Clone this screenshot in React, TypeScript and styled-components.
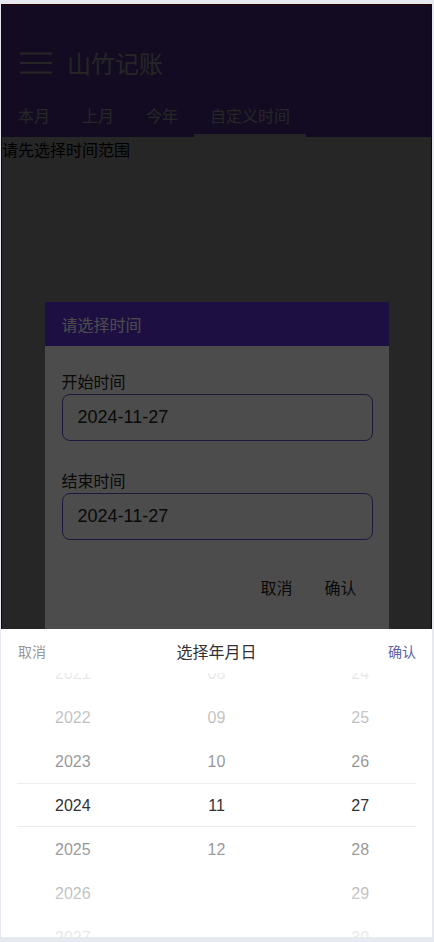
import React from "react";
import styled, { createGlobalStyle } from "styled-components";

const GlobalStyle = createGlobalStyle`
  html, body {
    margin: 0;
    padding: 0;
    background: #e6eaf0;
  }
  body {
    font-family: "Noto Sans CJK SC", "Liberation Sans", sans-serif;
  }
  * { box-sizing: border-box; }
`;

const Device = styled.div`
  position: relative;
  margin: 4px 2px 0 1px;
  width: 431px;
  height: 933px;
  overflow: hidden;
  background: #fff;
`;

const AppRoot = styled.div`
  height: 100%;
  border: 1px solid red;
  background: #fff;
  display: flex;
  flex-direction: column;
`;

const Header = styled.header`
  background: #7a4be2;
  padding-top: 34px;
  display: flex;
  flex-direction: column;
`;

const TitleRow = styled.div`
  display: flex;
  align-items: center;
  height: 48px;
  padding-left: 17px;
  gap: 14px;
`;

const Title = styled.h1`
  margin: 0;
  font-size: 24px;
  font-weight: 400;
  color: #fff;
  line-height: 1;
`;

const Tabs = styled.nav`
  display: flex;
  height: 50px;
`;

const Tab = styled.div<{ $active?: boolean }>`
  position: relative;
  display: flex;
  align-items: center;
  padding: 6px 16px 0;
  font-size: 16px;
  color: #fff;
  &::after {
    content: "";
    position: absolute;
    left: 0;
    right: 0;
    bottom: 0;
    height: 3px;
    background: ${(p) => (p.$active ? "#fff" : "transparent")};
  }
`;

const Content = styled.main`
  flex: 1;
  font-size: 16px;
  color: #000;
  line-height: 24px;
`;

const Mask = styled.div<{ $alpha: number }>`
  position: absolute;
  inset: 0;
  background: rgba(0, 0, 0, ${(p) => p.$alpha});
`;

const DialogLayer = styled(Mask)`
  display: flex;
  align-items: center;
  justify-content: center;
`;

const Dialog = styled.div`
  width: 344px;
  background: #fff;
`;

const DialogHead = styled.div`
  height: 44px;
  display: flex;
  align-items: center;
  padding: 0 17px;
  background: #6432dc;
  color: #fff;
  font-size: 16px;
`;

const DialogBody = styled.div`
  padding: 22px 16px 0 17px;
  display: flex;
  flex-direction: column;
  gap: 26px;
`;

const Field = styled.label`
  display: flex;
  flex-direction: column;
`;

const FieldLabel = styled.span`
  font-size: 16px;
  line-height: 26px;
  color: #222;
`;

const DateInput = styled.div`
  height: 47px;
  border: 1px solid #6a4fc8;
  border-radius: 8px;
  display: flex;
  align-items: center;
  padding-left: 15px;
  font-family: "Liberation Sans", Arial, sans-serif;
  font-size: 18px;
  color: #222;
`;

const DialogFoot = styled.div`
  display: flex;
  justify-content: flex-end;
  padding: 29px 16px 34px 0;
`;

const TextButton = styled.button`
  border: 0;
  background: transparent;
  height: 36px;
  padding: 0 16px;
  font-family: "Noto Sans CJK SC", sans-serif;
  font-size: 16px;
  color: #222;
`;

const Picker = styled.div`
  position: absolute;
  left: 0;
  right: 0;
  bottom: 0;
  background: #fff;
`;

const Toolbar = styled.div`
  height: 44px;
  display: flex;
  align-items: center;
  justify-content: space-between;
`;

const ToolButton = styled.button<{ $tone: "cancel" | "confirm" }>`
  border: 0;
  background: transparent;
  height: 100%;
  padding: 0 16px 0 17px;
  font-family: "Noto Sans CJK SC", sans-serif;
  font-size: 14px;
  color: ${(p) => (p.$tone === "cancel" ? "#969799" : "#5b63a8")};
`;

const ToolTitle = styled.div`
  font-size: 16px;
  font-weight: 400;
  line-height: 20px;
  color: #323233;
`;

const Columns = styled.div`
  position: relative;
  display: flex;
  height: 264px;
  overflow: hidden;
`;

const Column = styled.ul`
  flex: 1;
  margin: 0;
  padding: 0;
  list-style: none;
`;

const Item = styled.li`
  height: 44px;
  display: flex;
  align-items: center;
  justify-content: center;
  padding-top: 1px;
  font-family: "Liberation Sans", Arial, sans-serif;
  font-size: 16px;
  color: #323233;
`;

const FadeMask = styled.div`
  position: absolute;
  inset: 0;
  pointer-events: none;
  background-image: linear-gradient(180deg, rgba(255, 255, 255, 0.9), rgba(255, 255, 255, 0.4)),
    linear-gradient(0deg, rgba(255, 255, 255, 0.9), rgba(255, 255, 255, 0.4));
  background-position: top, bottom;
  background-size: 100% 110px;
  background-repeat: no-repeat;
`;

const SelectFrame = styled.div`
  position: absolute;
  left: 16px;
  right: 16px;
  top: 110px;
  height: 44px;
  border-top: 1px solid #ebedf0;
  border-bottom: 1px solid #ebedf0;
  pointer-events: none;
`;

const Menu = () => (
  <svg width="34" height="24" viewBox="0 0 34 24" fill="none">
    <path d="M1 2.5h32M1 12h32M1 21.5h32" stroke="#fff" strokeWidth="2" />
  </svg>
);

const pad = (n: number) => String(n).padStart(2, "0");
const years = Array.from({ length: 21 }, (_, i) => String(2014 + i));
const months = Array.from({ length: 12 }, (_, i) => pad(i + 1));
const days = Array.from({ length: 30 }, (_, i) => pad(i + 1));

const PickerColumn = ({ items, value }: { items: string[]; value: string }) => {
  const idx = items.indexOf(value);
  return (
    <Column style={{ transform: `translateY(${110 - idx * 44}px)` }}>
      {items.map((it) => (
        <Item key={it}>{it}</Item>
      ))}
    </Column>
  );
};

export default function App() {
  return (
    <>
      <GlobalStyle />
      <Device>
        <AppRoot>
          <Header>
            <TitleRow>
              <Menu />
              <Title>山竹记账</Title>
            </TitleRow>
            <Tabs>
              <Tab>本月</Tab>
              <Tab>上月</Tab>
              <Tab>今年</Tab>
              <Tab $active>自定义时间</Tab>
            </Tabs>
          </Header>
          <Content>请先选择时间范围</Content>
        </AppRoot>
        <DialogLayer $alpha={0.5}>
          <Dialog>
            <DialogHead>请选择时间</DialogHead>
            <DialogBody>
              <Field>
                <FieldLabel>开始时间</FieldLabel>
                <DateInput>2024-11-27</DateInput>
              </Field>
              <Field>
                <FieldLabel>结束时间</FieldLabel>
                <DateInput>2024-11-27</DateInput>
              </Field>
            </DialogBody>
            <DialogFoot>
              <TextButton>取消</TextButton>
              <TextButton>确认</TextButton>
            </DialogFoot>
          </Dialog>
        </DialogLayer>
        <Mask $alpha={0.7} />
        <Picker>
          <Toolbar>
            <ToolButton $tone="cancel">取消</ToolButton>
            <ToolTitle>选择年月日</ToolTitle>
            <ToolButton $tone="confirm">确认</ToolButton>
          </Toolbar>
          <Columns>
            <PickerColumn items={years} value="2024" />
            <PickerColumn items={months} value="11" />
            <PickerColumn items={days} value="27" />
            <FadeMask />
            <SelectFrame />
          </Columns>
        </Picker>
      </Device>
    </>
  );
}
